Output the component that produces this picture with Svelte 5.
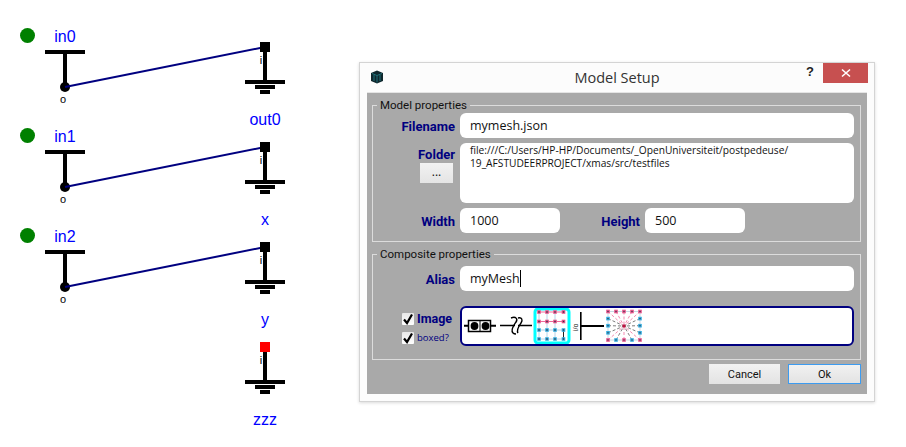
<script>
  const sources = [{ name: 'in0', y: 0 }, { name: 'in1', y: 100 }, { name: 'in2', y: 200 }];
  const sinks = [
    { name: 'out0', y: 0, fill: '#000' },
    { name: 'x', y: 100, fill: '#000' },
    { name: 'y', y: 200, fill: '#000' },
    { name: 'zzz', y: 300, fill: '#f00' }
  ];
  const gridX = [539, 547, 555, 563.5];
  const gridY = [312, 321.5, 330, 339];
  const gridNodes = gridY.flatMap((y, r) => gridX.map((x) => ({ x, y, pink: r < 2 })));
  const perim = [];
  for (let i = 0; i < 5; i++) {
    const x = 608 + i * 8;
    perim.push({ x, y: 311.5, pink: true }, { x, y: 340, pink: i % 2 === 0 });
  }
  for (let i = 1; i < 4; i++) {
    const y = 311.5 + i * 7.1;
    perim.push({ x: 608, y, pink: false }, { x: 640, y, pink: false });
  }
</script>

<div class="page">
  <svg class="canvas" width="359" height="447" viewBox="0 0 359 447">
    {#each sources as s}
      <circle cx="27.5" cy={35.5 + s.y} r="7.5" fill="#008000" />
      <text class="name" x="65" y={42 + s.y}>{s.name}</text>
      <rect x="45" y={50 + s.y} width="40" height="4" fill="#000" />
      <rect x="63" y={54 + s.y} width="4" height="33" fill="#000" />
      <circle cx="65" cy={87 + s.y} r="5" fill="#000" />
      <text class="pin" x="63" y={103 + s.y}>o</text>
      <line x1="65" y1={87 + s.y} x2="265" y2={47 + s.y} stroke="#000080" stroke-width="2" />
    {/each}
    {#each sinks as k}
      <rect x="263" y={52 + k.y} width="4" height="29" fill="#000" />
      <rect x="260" y={42 + k.y} width="10" height="10" fill={k.fill} />
      <text class="pin" x="261" y={64 + k.y}>i</text>
      <rect x="245" y={80 + k.y} width="40" height="4" fill="#000" />
      <rect x="255" y={85 + k.y} width="20" height="4" fill="#000" />
      <rect x="260" y={90 + k.y} width="10" height="4" fill="#000" />
      <text class="name" x="265" y={125 + k.y}>{k.name}</text>
    {/each}
  </svg>

  <div class="dialog">
    <header class="titlebar">
      <svg class="appicon" width="14" height="14" viewBox="0 0 14 14">
        <path d="M7 0.5 13 3 13 11 7 13.5 1 11 1 3Z" fill="#0e262c" />
        <path d="M2 3.5 7 5.5 12 3.5M7 5.5V12.5M4 5v6M10 5v6" stroke="#1f6f78" stroke-width="1" fill="none" />
      </svg>
      <h1>Model Setup</h1>
      <span class="help">?</span>
      <button class="close" aria-label="Close">
        <svg width="10" height="10" viewBox="0 0 10 10"><path d="M1 1.5 9 8.5M9 1.5 1 8.5" stroke="#fff" stroke-width="1.6" /></svg>
      </button>
    </header>

    <div class="body">
      <fieldset class="group first">
        <legend>Model properties</legend>
        <div class="row">
          <span class="label">Filename</span>
          <div class="field grow">mymesh.json</div>
        </div>
        <div class="row top">
          <div class="foldercol">
            <span class="label">Folder</span>
            <button class="browse">...</button>
          </div>
          <div class="field grow area">file:///C:/Users/HP-HP/Documents/_OpenUniversiteit/postpedeuse/<br />19_AFSTUDEERPROJECT/xmas/src/testfiles</div>
        </div>
        <div class="row">
          <span class="label">Width</span>
          <div class="field small">1000</div>
          <span class="label inner">Height</span>
          <div class="field small">500</div>
        </div>
      </fieldset>

      <fieldset class="group second">
        <legend>Composite properties</legend>
        <div class="row">
          <span class="label">Alias</span>
          <div class="field grow">myMesh<span class="caret"></span></div>
        </div>
        <div class="row imagerow">
          <div class="checks">
            <label class="check big"><span class="box"><svg width="12" height="12" viewBox="0 0 12 12"><path d="M2 6.5 5 10 10 1.5" fill="none" stroke="#000" stroke-width="2.2" /></svg></span>Image</label>
            <label class="check"><span class="box"><svg width="12" height="12" viewBox="0 0 12 12"><path d="M2 6.5 5 10 10 1.5" fill="none" stroke="#000" stroke-width="2.2" /></svg></span>boxed?</label>
          </div>
          <div class="picker">
            <svg width="394" height="40" viewBox="460 306 394 40">
              <path d="M464 325.7H468M491 325.7H496" stroke="#000" stroke-width="2" />
              <rect x="468.5" y="320.5" width="22" height="11" fill="#fff" stroke="#000" stroke-width="1.5" />
              <line x1="480" y1="320" x2="480" y2="332" stroke="#000" />
              <circle cx="474.5" cy="326" r="3.9" fill="#000" />
              <circle cx="485.5" cy="326" r="3.9" fill="#000" />

              <path d="M500 325.5H515M518 325.5H532" stroke="#000" stroke-width="1.4" />
              <path d="M511 318C516 316 518 319 516 322C514 325 510 330 513 333C514 334 515 334 516 334M518 318C522 317 523 320 521 323C519 326 516 330 518 333" fill="none" stroke="#000" stroke-width="1.4" />

              <rect x="535" y="309" width="34" height="34" rx="3" fill="#fff" stroke="#00ffff" stroke-width="3" />
              <path d="M539 312H563.5M539 321.5H563.5" stroke="#f06a9a" />
              <path d="M539 330H563.5M539 339H563.5M539 312V339M547 312V339M555 312V339" stroke="#b4d4e8" />
              <path d="M563.5 330V339" stroke="#222" />
              {#each gridNodes as n}
                <rect x={n.x - 1.8} y={n.y - 1.8} width="3.6" height="3.6" fill={n.pink ? '#e8558c' : '#35aee0'} />
                <rect x={n.x - 0.7} y={n.y - 0.7} width="1.4" height="1.4" fill="#334" />
              {/each}

              <text class="tiny" transform="translate(578 331) rotate(-90)">i/o</text>
              <rect x="580" y="312" width="1.6" height="28" fill="#000" />
              <rect x="581" y="325" width="23" height="2" fill="#000" />

              <rect x="608" y="311.5" width="32" height="28.5" fill="none" stroke="#c8d8e6" />
              {#each perim as n}
                <line x1={n.x} y1={n.y} x2="624" y2="326" stroke={n.pink ? '#ee5a90' : '#444'} stroke-width="0.7" stroke-dasharray="3 2" />
              {/each}
              {#each perim as n}
                <rect x={n.x - 1.8} y={n.y - 1.8} width="3.6" height="3.6" fill={n.pink ? '#e8558c' : '#35aee0'} />
                <rect x={n.x - 0.6} y={n.y - 0.6} width="1.2" height="1.2" fill="#334" />
              {/each}
              <rect x="622.5" y="324.5" width="3" height="3" fill="#c01040" />
            </svg>
          </div>
        </div>
      </fieldset>

      <footer class="actions">
        <button class="btn">Cancel</button>
        <button class="btn ok">Ok</button>
      </footer>
    </div>
  </div>
</div>

<style>
  :global(body) {
    margin: 0;
    background: #fff;
  }
  .page {
    display: flex;
    align-items: flex-start;
    width: 906px;
    height: 447px;
    overflow: hidden;
  }
  .canvas {
    flex: none;
    display: block;
  }
  .name {
    font: 16px "Liberation Sans", sans-serif;
    fill: #0000ff;
    text-anchor: middle;
  }
  .pin {
    font: 11px "Liberation Sans", sans-serif;
    fill: #000;
    text-anchor: middle;
  }
  .dialog {
    flex: none;
    box-sizing: border-box;
    width: 516px;
    height: 340px;
    margin-top: 62px;
    background: #fcfcfc;
    border: 1px solid #d4d4d4;
    box-shadow: 0 1px 3px rgba(0, 0, 0, 0.15);
    padding: 0 7px 7px;
    display: flex;
    flex-direction: column;
    font-family: "Open Sans", sans-serif;
  }
  .titlebar {
    flex: none;
    height: 29px;
    position: relative;
    display: flex;
    align-items: center;
    justify-content: center;
  }
  .appicon {
    position: absolute;
    left: 3px;
    top: 7px;
  }
  h1 {
    margin: 0;
    font: 400 14.5px "Open Sans", sans-serif;
    color: #333;
  }
  .help {
    position: absolute;
    left: 439px;
    top: 1px;
    font: 700 13px "Liberation Sans", sans-serif;
    color: #222;
  }
  .close {
    position: absolute;
    right: -1px;
    top: 0;
    width: 45px;
    height: 20px;
    border: 0;
    padding: 0;
    background: #c75050;
    display: flex;
    align-items: center;
    justify-content: center;
  }
  .body {
    flex: 1;
    background: #a9a9a9;
    padding: 5px 6px 7px 5px;
    display: flex;
    flex-direction: column;
    min-height: 0;
    border-top: 1px solid #e4e4e4;
  }
  .group {
    margin: 0;
    padding: 0 6px 0 0;
    border: 1px solid #dcdcdc;
    min-width: 0;
    box-sizing: border-box;
    display: flex;
    flex-direction: column;
  }
  .first {
    flex: none;
    height: 144px;
    padding-top: 1px;
    gap: 5px;
  }
  .second {
    flex: none;
    height: 113px;
    margin-top: 5px;
    gap: 15px;
    padding-top: 5px;
  }
  legend {
    margin-left: 4px;
    padding: 0 3px;
    font: 400 11.5px Roboto, sans-serif;
    line-height: 14px;
    color: #111;
  }
  .row {
    display: flex;
    align-items: center;
    gap: 5px;
  }
  .row.top {
    align-items: flex-start;
  }
  .label {
    flex: none;
    width: 82px;
    text-align: right;
    font: 700 13px Roboto, sans-serif;
    color: #000080;
    padding-top: 1px;
  }
  .label.inner {
    width: 75px;
  }
  .field {
    box-sizing: border-box;
    height: 25px;
    background: #fff;
    border-radius: 6px;
    padding: 0 10px;
    display: flex;
    align-items: center;
    font: 400 12.5px "Open Sans", sans-serif;
    color: #111;
  }
  .grow {
    flex: 1;
  }
  .small {
    width: 100px;
  }
  .area {
    display: block;
    height: 60px;
    padding: 1px 10px;
    font: 400 10.2px/13px "Open Sans", sans-serif;
  }
  .foldercol {
    flex: none;
    width: 82px;
    display: flex;
    flex-direction: column;
    align-items: flex-end;
    gap: 1px;
    padding-top: 3px;
  }
  .foldercol .label {
    width: auto;
  }
  .browse {
    width: 33px;
    height: 20px;
    padding: 0 0 6px;
    margin-right: 2px;
    border: 0;
    background: linear-gradient(#f2f2f2, #e4e4e4);
    font: 400 12px "Open Sans", sans-serif;
    color: #111;
  }
  .caret {
    display: inline-block;
    width: 1px;
    height: 17px;
    background: #000;
  }
  .imagerow {
    gap: 0;
  }
  .checks {
    flex: none;
    width: 87px;
    padding-left: 29px;
    margin-top: 4px;
    box-sizing: border-box;
    display: flex;
    flex-direction: column;
    gap: 6px;
  }
  .check {
    display: flex;
    align-items: center;
    gap: 3px;
    height: 13px;
    font: 400 9.5px "Open Sans", sans-serif;
    color: #000080;
    white-space: nowrap;
  }
  .check.big {
    font: 700 12.5px Roboto, sans-serif;
  }
  .box {
    flex: none;
    width: 12px;
    height: 12px;
    background: linear-gradient(#e8e8e8, #fff);
    border-radius: 1px;
    display: flex;
  }
  .picker {
    flex: 1;
    box-sizing: border-box;
    height: 40px;
    border: 2px solid #000080;
    border-radius: 6px;
    background: #fff;
    overflow: hidden;
  }
  .picker svg {
    display: block;
    margin: -2px;
  }
  .tiny {
    font: 7px "Liberation Sans", sans-serif;
    fill: #111;
  }
  .actions {
    flex: 1;
    display: flex;
    justify-content: flex-end;
    align-items: center;
    gap: 8px;
    padding-top: 1px;
  }
  .btn {
    box-sizing: border-box;
    width: 71px;
    height: 20px;
    border: 0;
    padding: 0;
    background: linear-gradient(#f1f1f1, #e3e3e3);
    font: 400 11px Roboto, sans-serif;
    color: #111;
  }
  .ok {
    width: 73px;
    border: 1px solid #3c9bf0;
  }
</style>
